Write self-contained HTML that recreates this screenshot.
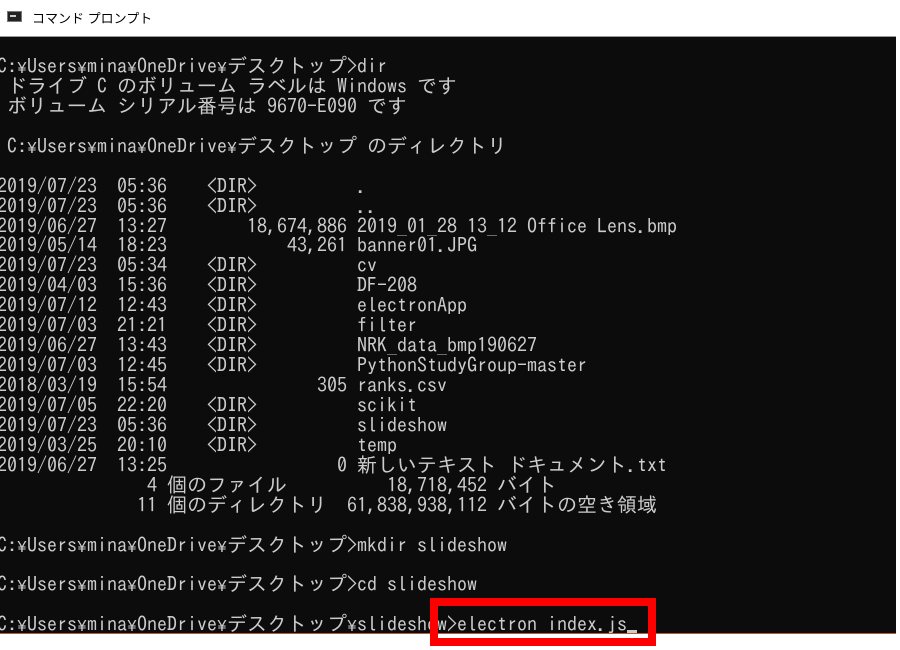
<!DOCTYPE html>
<html><head><meta charset="utf-8"><style>
html,body{margin:0;padding:0;width:900px;height:650px;background:#fff;overflow:hidden;position:relative}
.title{position:absolute;left:32px;top:8px;font:13px "Liberation Sans","Noto Sans CJK JP",sans-serif;color:#000}
.icon{position:absolute;left:7px;top:11px;width:15px;height:11px;background:#222;border:1px solid #777;box-sizing:border-box}
.icon:after{content:"";position:absolute;left:2px;top:3px;width:6px;height:2px;background:#ccc}
.con{position:absolute;left:0;top:36px;width:896px;height:598px;background:#0c0c0c;border-top:1px solid #999;border-bottom:1px solid #b65a3a;box-sizing:border-box}
pre{position:absolute;left:-3px;top:57px;margin:0;font:20px/19.93px "IPAGothic","Noto Sans CJK JP",monospace;color:#cccccc;white-space:pre}
.y{display:inline-block;width:10px;font-family:"Liberation Sans",sans-serif;font-size:16px;line-height:0;text-align:center;overflow:visible;vertical-align:baseline}
.box{position:absolute;left:430px;top:598px;width:226px;height:48px;border:8px solid #ff0000;box-sizing:border-box}
.cur{display:inline-block;width:10px;height:3px;background:#ccc;vertical-align:-2px;line-height:0}
</style></head><body>
<div class="icon"></div><div class="title">コマンド プロンプト</div>
<div class="con"></div>
<pre>C:<span class="y">¥</span>Users<span class="y">¥</span>mina<span class="y">¥</span>OneDrive<span class="y">¥</span>デスクトップ&gt;dir
 ドライブ C のボリューム ラベルは Windows です
 ボリューム シリアル番号は 9670-E090 です

 C:<span class="y">¥</span>Users<span class="y">¥</span>mina<span class="y">¥</span>OneDrive<span class="y">¥</span>デスクトップ のディレクトリ

2019/07/23  05:36    &lt;DIR&gt;          .
2019/07/23  05:36    &lt;DIR&gt;          ..
2019/06/27  13:27        18,674,886 2019_01_28 13_12 Office Lens.bmp
2019/05/14  18:23            43,261 banner01.JPG
2019/07/23  05:34    &lt;DIR&gt;          cv
2019/04/03  15:36    &lt;DIR&gt;          DF-208
2019/07/12  12:43    &lt;DIR&gt;          electronApp
2019/07/03  21:21    &lt;DIR&gt;          filter
2019/06/27  13:43    &lt;DIR&gt;          NRK_data_bmp190627
2019/07/03  12:45    &lt;DIR&gt;          PythonStudyGroup-master
2018/03/19  15:54               305 ranks.csv
2019/07/05  22:20    &lt;DIR&gt;          scikit
2019/07/23  05:36    &lt;DIR&gt;          slideshow
2019/03/25  20:10    &lt;DIR&gt;          temp
2019/06/27  13:25                 0 新しいテキスト ドキュメント.txt
               4 個のファイル          18,718,452 バイト
              11 個のディレクトリ  61,838,938,112 バイトの空き領域

C:<span class="y">¥</span>Users<span class="y">¥</span>mina<span class="y">¥</span>OneDrive<span class="y">¥</span>デスクトップ&gt;mkdir slideshow

C:<span class="y">¥</span>Users<span class="y">¥</span>mina<span class="y">¥</span>OneDrive<span class="y">¥</span>デスクトップ&gt;cd slideshow

C:<span class="y">¥</span>Users<span class="y">¥</span>mina<span class="y">¥</span>OneDrive<span class="y">¥</span>デスクトップ<span class="y">¥</span>slideshow&gt;electron index.js<span class="cur"></span></pre>
<div class="box"></div>
</body></html>
